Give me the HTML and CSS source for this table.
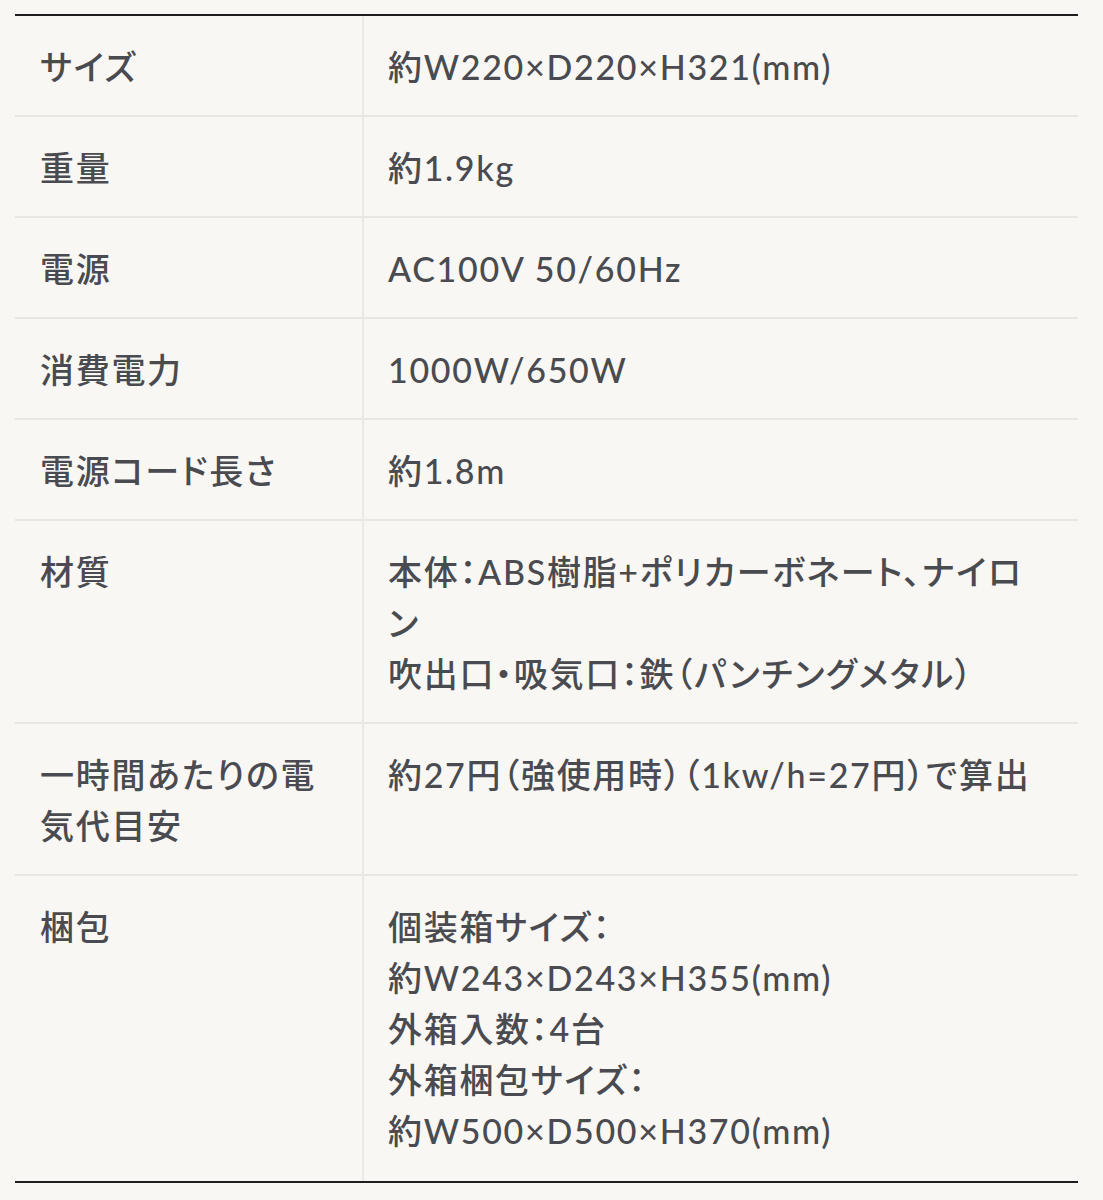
FILE: index.html
```html
<!DOCTYPE html>
<html lang="ja">
<head>
<meta charset="utf-8">
<title>仕様</title>
<link rel="stylesheet" href="styles.css">
</head>
<body>
<div class="page">
  <table class="spec">
    <tbody>
      <tr><th>サイズ</th><td>約W220×D220×H321(mm)</td></tr>
      <tr><th>重量</th><td>約1.9kg</td></tr>
      <tr><th>電源</th><td>AC100V 50/60Hz</td></tr>
      <tr><th>消費電力</th><td>1000W/650W</td></tr>
      <tr><th>電源コード長さ</th><td>約1.8m</td></tr>
      <tr><th>材質</th><td>本体：ABS樹脂+ポリカーボネート、ナイロン<br>吹出口・吸気口：鉄（パンチングメタル）</td></tr>
      <tr><th>一時間あたりの電気代目安</th><td>約27円（強使用時）（1kw/h=27円）で算出</td></tr>
      <tr><th>梱包</th><td>個装箱サイズ：<br>約W243×D243×H355(mm)<br>外箱入数：4台<br>外箱梱包サイズ：<br>約W500×D500×H370(mm)</td></tr>
    </tbody>
  </table>
</div>
</body>
</html>
```

FILE: styles.css
```css
html, body {
  margin: 0;
  padding: 0;
  background: #f8f7f4;
}
.page {
  padding: 14px 25px 0 15px;
}
.spec {
  width: 100%;
  border-collapse: separate;
  border-spacing: 0;
  border-top: 2px solid #1e1e1e;
  border-bottom: 2px solid #1e1e1e;
  font-family: Lato, "Noto Sans CJK JP", sans-serif;
  font-size: 34px;
  line-height: 51px;
  letter-spacing: 0.05em;
  font-feature-settings: "palt";
  color: #4a4b50;
}
.spec th,
.spec td {
  text-align: left;
  vertical-align: top;
  font-weight: 500;
  padding: 25px 30px 23px 24px;
  border-bottom: 2px solid #e8e6e2;
}
.spec tr:last-child th,
.spec tr:last-child td {
  border-bottom: none;
  padding-bottom: 25px;
}
.spec th {
  width: 292px;
  padding-left: 25px;
  padding-right: 30px;
  border-right: 2px solid #ebe9e5;
}
```
